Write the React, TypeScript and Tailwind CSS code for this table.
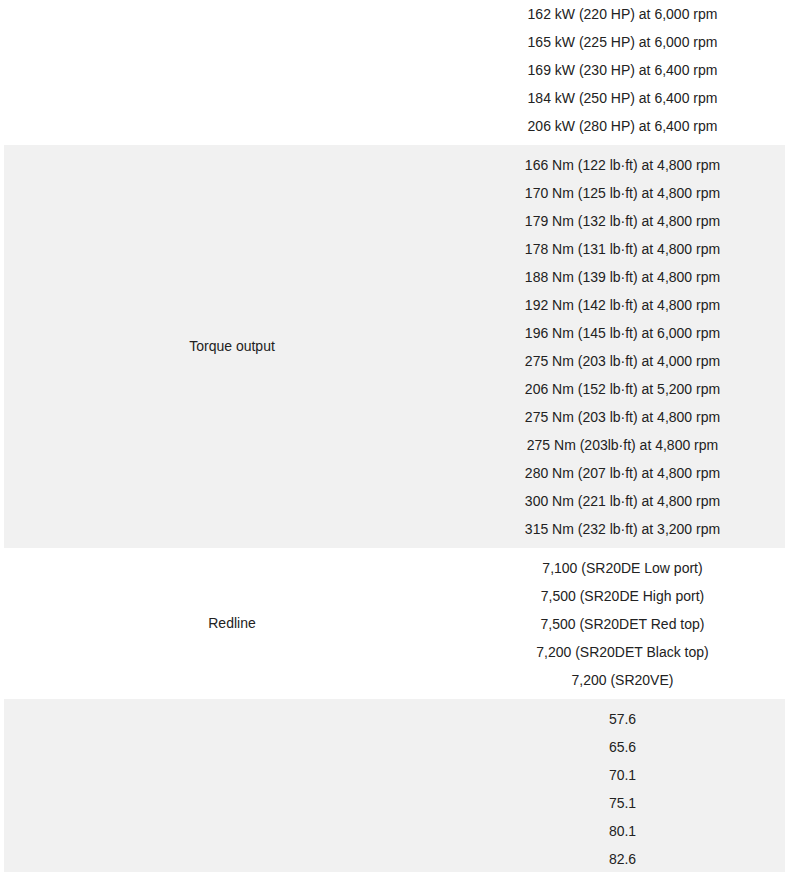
import React from "react";

type SpecRow = {
  label: string;
  values: string[];
};

const rows: SpecRow[] = [
  {
    label: "",
    values: [
      "162 kW (220 HP) at 6,000 rpm",
      "165 kW (225 HP) at 6,000 rpm",
      "169 kW (230 HP) at 6,400 rpm",
      "184 kW (250 HP) at 6,400 rpm",
      "206 kW (280 HP) at 6,400 rpm",
    ],
  },
  {
    label: "Torque output",
    values: [
      "166 Nm (122 lb·ft) at 4,800 rpm",
      "170 Nm (125 lb·ft) at 4,800 rpm",
      "179 Nm (132 lb·ft) at 4,800 rpm",
      "178 Nm (131 lb·ft) at 4,800 rpm",
      "188 Nm (139 lb·ft) at 4,800 rpm",
      "192 Nm (142 lb·ft) at 4,800 rpm",
      "196 Nm (145 lb·ft) at 6,000 rpm",
      "275 Nm (203 lb·ft) at 4,000 rpm",
      "206 Nm (152 lb·ft) at 5,200 rpm",
      "275 Nm (203 lb·ft) at 4,800 rpm",
      "275 Nm (203lb·ft) at 4,800 rpm",
      "280 Nm (207 lb·ft) at 4,800 rpm",
      "300 Nm (221 lb·ft) at 4,800 rpm",
      "315 Nm (232 lb·ft) at 3,200 rpm",
    ],
  },
  {
    label: "Redline",
    values: [
      "7,100 (SR20DE Low port)",
      "7,500 (SR20DE High port)",
      "7,500 (SR20DET Red top)",
      "7,200 (SR20DET Black top)",
      "7,200 (SR20VE)",
    ],
  },
  {
    label: "",
    values: ["57.6", "65.6", "70.1", "75.1", "80.1", "82.6"],
  },
];

export default function App() {
  return (
    <div className="bg-white h-[872px] overflow-hidden font-['Liberation_Sans',Arial,sans-serif] text-[14px] text-[#222]">
      <div className="-mt-[6px] ml-[4px] w-[781px]">
        {rows.map((row, i) => (
          <div
            key={i}
            className={`flex ${i % 2 === 1 ? "bg-[#f1f1f1]" : "bg-white"}`}
          >
            <div className="w-[456px] flex items-center justify-center">
              {row.label}
            </div>
            <div className="flex-1 pt-[6px] pb-[5px] text-center">
              {row.values.map((v) => (
                <div key={v} className="leading-[28px]">
                  {v}
                </div>
              ))}
            </div>
          </div>
        ))}
      </div>
    </div>
  );
}
